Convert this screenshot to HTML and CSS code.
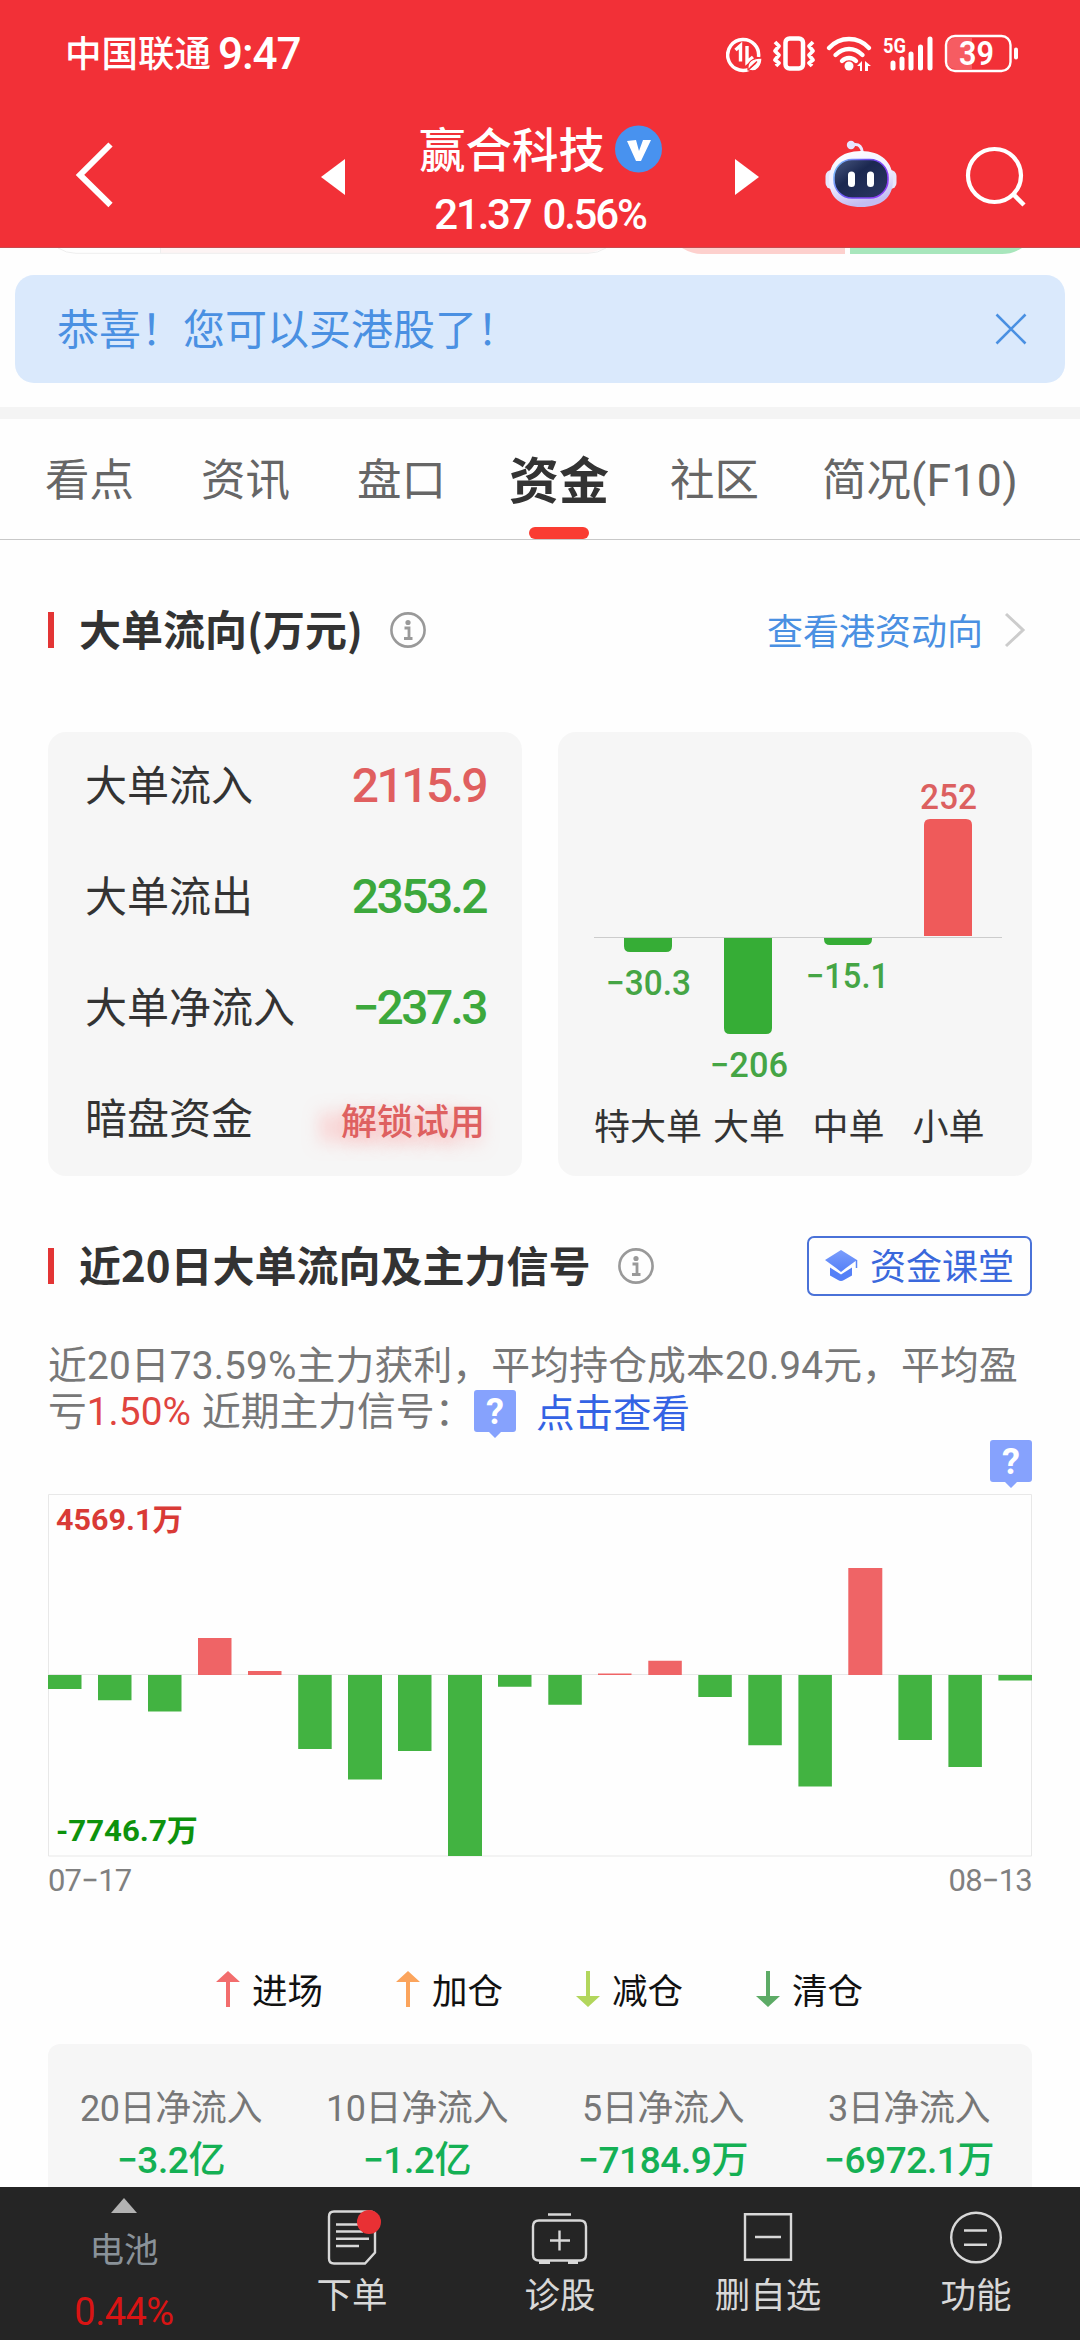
FILE: index.html
```html
<!DOCTYPE html>
<html lang="zh-CN">
<head>
<meta charset="utf-8">
<title>赢合科技 资金</title>
<link rel="stylesheet" href="styles.css">
</head>
<body>
<div class="screen">
  <header class="top">
    <div class="status">
      <span class="carrier">中国联通</span><span class="clock">9:47</span>
      <svg class="status-icons" width="294" height="40" viewBox="726 34 294 40" fill="none" stroke="#fff">
        <path d="M749 69.300A15.500 15.500 0 1 1 758.500 57" stroke-width="3.500"/>
        <path d="M735.500 50l5-4.500v16M747 46v16l6-5" stroke-width="3.400"/>
        <path d="M748 70c-1-9 5-12 14-12 0 8-5 14-11 12.500zM748 70l8-7" fill="#fff" stroke="#f23037" stroke-width="1.200"/>
        <path d="M750 68l7-6.500" stroke="#f23037" stroke-width="1.500"/>
        <rect x="785.500" y="38.500" width="17.500" height="30" rx="4" stroke-width="4.500"/>
        <path d="M775 42l4 4-4 5 4 4-4 5 4 3-3 3M813 42l-4 4 4 5-4 4 4 5-4 3 3 3" stroke-width="3.800" stroke-linejoin="round"/>
        <path d="M829 48c11-12 29-12 40 0M835.500 55c8-8 19-8 27 0M842 61c4-4 10-4 14 0" stroke-width="4.400" stroke-linecap="round"/>
        <circle cx="849" cy="66" r="4.500" fill="#fff" stroke="none"/>
        <path d="M857 66l5-5v10h-2v-5zM865 61l6 5h-3v5h-3z" fill="#fff" stroke="none"/>
        <path d="M893 63v5M902 59v9M911 54v14M920.500 47v21M930 39v29" stroke-width="5" stroke-linecap="round"/>
        <text x="883" y="53" textLength="23" lengthAdjust="spacingAndGlyphs" class="net">5G</text>
        <path d="M956 38h16v31h-16q-9 0-9-9v-13q0-9 9-9z" fill="#f65c62" stroke="none"/>
        <rect x="946" y="36" width="64.500" height="35" rx="9" stroke-width="2.400"/>
        <path d="M1016 49.500v8" stroke-width="4" stroke-linecap="round"/>
        <text x="959" y="65" textLength="35" lengthAdjust="spacingAndGlyphs" class="pct">39</text>
      </svg>
    </div>
    <div class="nav">
      <svg class="back" width="40" height="68" viewBox="0 0 40 68" fill="none"><path d="M35.500 4.500L5 35l30.500 30" stroke="#fff" stroke-width="6"/></svg>
      <svg class="prev" width="24" height="36" viewBox="0 0 24 36"><path d="M24 0v36L0 18z" fill="#fff"/></svg>
      <div class="stock">
        <div class="name"><span>赢合科技</span><svg width="47" height="48" viewBox="0 0 47 48"><circle cx="23.500" cy="24" r="23.500" fill="#4892ef"/><path d="M12 16l9-1 3 11 4-11h8L26 36h-5z" fill="#fff"/></svg></div>
        <div class="quote"><span>21.37</span><span>0.56%</span></div>
      </div>
      <svg class="next" width="24" height="36" viewBox="0 0 24 36"><path d="M0 0v36l24-18z" fill="#fff"/></svg>
      <svg class="robot" width="72" height="68" viewBox="825 140 72 68">
        <defs>
          <linearGradient id="shell" x1="0" y1="0" x2="0.300" y2="1"><stop offset="0" stop-color="#fff"/><stop offset=".6" stop-color="#eeecff"/><stop offset="1" stop-color="#c3bdf2"/></linearGradient>
          <linearGradient id="face" x1="0" y1="0" x2="1" y2="1"><stop offset="0" stop-color="#4b5a82"/><stop offset=".4" stop-color="#1b2850"/><stop offset="1" stop-color="#2b3763"/></linearGradient>
          <linearGradient id="rim" x1="0" y1="0" x2="1" y2="0.400"><stop offset="0" stop-color="#7fd4ff"/><stop offset=".5" stop-color="#6a4ff0"/><stop offset="1" stop-color="#8a3ff5"/></linearGradient>
        </defs>
        <path d="M852 145c8-2 10 3 10.500 8" fill="none" stroke="#ece8ff" stroke-width="3"/>
        <circle cx="851" cy="145" r="4.200" fill="#e6e4ff"/>
        <rect x="825.500" y="170" width="13" height="19" rx="6" fill="#e7e6fb"/><rect x="883.500" y="170" width="13" height="19" rx="6" fill="#e7e6fb"/>
        <path d="M861 151c20 0 32 11 32 29s-12 27-32 27-32-9-32-27 12-29 32-29z" fill="url(#shell)"/>
        <rect x="834" y="159.500" width="54" height="38.500" rx="18" fill="url(#face)" stroke="url(#rim)" stroke-width="1.600"/>
        <rect x="848" y="171.500" width="7" height="15.500" rx="3.500" fill="#fff"/><rect x="867" y="171.500" width="7" height="15.500" rx="3.500" fill="#fff"/>
      </svg>
      <svg class="search" width="62" height="62" viewBox="965 145 62 62" fill="none" stroke="#fff" stroke-width="4.200"><circle cx="994.500" cy="175.500" r="26.500"/><path d="M1013 194l11 11" stroke-width="4.500"/></svg>
    </div>
  </header>

  <div class="peek">
    <svg width="1080" height="6" viewBox="0 248 1080 6" fill="none"><path d="M160.500 248v5.500H588l18-5.500z" fill="#fdf4f4"/><path d="M58 248q8 5.300 18 5.300H588q10 0 18-5.300M160.500 248v5" stroke="#eee"/><path d="M682 248h163v6H702q-10 0-20-6z" fill="#fdd0cd"/><path d="M850 248h172q-10 6-20 6H850z" fill="#a8e6bc"/></svg>
  </div>

  <div class="banner"><span>恭喜！您可以买港股了！</span><svg width="32" height="32" viewBox="0 0 32 32"><path d="M1.500 1.500l29 29M30.500 1.500l-29 29" stroke="#4a90e2" stroke-width="2.600"/></svg></div>

  <nav class="tabs">
    <span class="tab">看点</span><span class="tab">资讯</span><span class="tab">盘口</span><span class="tab active">资金</span><span class="tab">社区</span><span class="tab f10">简况<span class="latin">(F10)</span></span>
  </nav>

  <section class="flow">
    <div class="head">
      <h2>大单流向(万元)</h2>
      <svg class="info" width="36" height="36" viewBox="0 0 36 36"><circle cx="18" cy="18" r="16.600" fill="none" stroke="#999" stroke-width="2.600"/><circle cx="18" cy="10.500" r="2.600" fill="#999"/><path d="M14.500 16h4.500v10M14 26.500h8.500" fill="none" stroke="#999" stroke-width="2.800"/></svg>
      <a class="more"><span>查看港资动向</span><svg width="22" height="36" viewBox="0 0 22 36"><path d="M2 2l17 16L2 34" fill="none" stroke="#ccc" stroke-width="3"/></svg></a>
    </div>
    <div class="cards">
      <div class="card list">
        <div class="row"><span>大单流入</span><b class="red">2115.9</b></div>
        <div class="row"><span>大单流出</span><b>2353.2</b></div>
        <div class="row"><span>大单净流入</span><b>−237.3</b></div>
        <div class="row"><span>暗盘资金</span><span class="unlock">解锁试用</span></div>
      </div>
      <svg class="card" width="474" height="444" viewBox="558 732 474 444">
        <g fill="#36ad36"><path d="M624 938h48v8q0 6-6 6h-36q-6 0-6-6z"/><path d="M724 938h48v90q0 6-6 6h-36q-6 0-6-6z"/><path d="M824 938h48v1q0 6-6 6h-36q-6 0-6-6z"/></g>
        <path d="M924 936v-111q0-6 6-6h36q6 0 6 6v111z" fill="#ef5a5a"/>
        <path d="M594 937.500h408" stroke="#ccc"/>
        <g class="vals">
          <text x="606" y="995" textLength="85" lengthAdjust="spacingAndGlyphs">−30.3</text>
          <text x="710" y="1077" textLength="78" lengthAdjust="spacingAndGlyphs">−206</text>
          <text x="806" y="988" textLength="83" lengthAdjust="spacingAndGlyphs">−15.1</text>
          <text x="920" y="809" textLength="57" lengthAdjust="spacingAndGlyphs" class="up">252</text>
        </g>
        <g class="cats"><text x="594" y="1139.500">特大单</text><text x="713" y="1139.500">大单</text><text x="812.500" y="1139.500">中单</text><text x="912.500" y="1139.500">小单</text></g>
      </svg>
    </div>
  </section>

  <section class="signal">
    <div class="head">
      <h2>近20日大单流向及主力信号</h2>
      <svg class="info" width="36" height="36" viewBox="0 0 36 36"><circle cx="18" cy="18" r="16.600" fill="none" stroke="#999" stroke-width="2.600"/><circle cx="18" cy="10.500" r="2.600" fill="#999"/><path d="M14.500 16h4.500v10M14 26.500h8.500" fill="none" stroke="#999" stroke-width="2.800"/></svg>
      <a class="class-btn"><svg width="35" height="32" viewBox="0 0 35 32"><defs><linearGradient id="cap" x1="0" y1="0" x2="0" y2="1"><stop offset="0" stop-color="#7b9dfc"/><stop offset="1" stop-color="#5580f7"/></linearGradient></defs><path d="M17 0l16 10-11 8-5 4-5-4L1 10z" fill="url(#cap)"/><path d="M6 17.500l11 7 11-7v8l-8 4.500q-3 2-6 0l-8-4.500z" fill="#5580f7"/><path d="M32.500 10v8" stroke="#5c86f6" stroke-width="1.500"/></svg><span>资金课堂</span></a>
    </div>
    <div class="summary">
      <div class="line one">近20日73.59%主力获利，平均持仓成本20.94元，平均盈</div>
      <div class="line two"><span>亏<em>1.50%</em></span><span class="near">近期主力信号：</span><svg class="bubble" width="42" height="48" viewBox="0 0 42 48"><path d="M3 0h36q3 0 3 3v36q0 3-3 3H27l-6 6-6-6H3q-3 0-3-3V3q0-3 3-3z" fill="#86a2fd"/><text x="21" y="34" text-anchor="middle" class="q">?</text></svg><a>点击查看</a></div>
    </div>
    <div class="bubble-row"><svg class="bubble" width="42" height="48" viewBox="0 0 42 48"><path d="M3 0h36q3 0 3 3v36q0 3-3 3H27l-6 6-6-6H3q-3 0-3-3V3q0-3 3-3z" fill="#86a2fd"/><text x="21" y="34" text-anchor="middle" class="q">?</text></svg></div>
    <svg class="history" width="984" height="364" viewBox="48 1494 984 364">
      <path d="M48.500 1494.500h983v361.500h-983zM48 1674.500h984" fill="none" stroke="#e8e8e8"/>
      <path fill="#42b341" d="M48 1675h33.500v14H48zM98 1675h33.500v25.300H98zM148 1675h33.500v36.500H148zM298.200 1675h33.500v74H298.200zM348 1675h34v104.500h-34zM398 1675h33.500v76H398zM448 1675h34v181h-34zM498 1675h33.500v11.700H498zM548.300 1675h33.500v29.700h-33.500zM698.300 1675h33.500v22h-33.500zM748.300 1675h33.500v70.300h-33.500zM798.400 1675h33.500v111.600h-33.500zM898.400 1675h33.500v65h-33.500zM948.400 1675h33.500v92h-33.500zM998.400 1675h33.600v5.500h-33.600z"/>
      <path fill="#ef6466" d="M198 1675h33.500v-37H198zM248 1675h33.500v-4H248zM598 1675h33.500v-1.600H598zM648.300 1675h33.500v-14.300h-33.500zM848.300 1675h34v-107h-34z"/>
      <text x="56" y="1530" textLength="127" lengthAdjust="spacingAndGlyphs" class="max">4569.1万</text>
      <text x="56" y="1841" textLength="142" lengthAdjust="spacingAndGlyphs" class="min">-7746.7万</text>
    </svg>
    <div class="dates"><span>07−17</span><span>08−13</span></div>
    <div class="legend">
      <span><svg width="24" height="36" viewBox="0 0 24 36"><path d="M12 0l12 11H14v25h-4V11H0z" fill="#f26d6d"/></svg>进场</span>
      <span><svg width="24" height="36" viewBox="0 0 24 36"><path d="M12 0l12 11H14v25h-4V11H0z" fill="#fba45c"/></svg>加仓</span>
      <span><svg width="24" height="36" viewBox="0 0 24 36"><path d="M12 36L0 25h10V0h4v25h10z" fill="#b2d65c"/></svg>减仓</span>
      <span><svg width="24" height="36" viewBox="0 0 24 36"><path d="M12 36L0 25h10V0h4v25h10z" fill="#5dab66"/></svg>清仓</span>
    </div>
    <div class="totals">
      <div><span>20日净流入</span><b>−3.2亿</b></div>
      <div><span>10日净流入</span><b>−1.2亿</b></div>
      <div><span>5日净流入</span><b>−7184.9万</b></div>
      <div><span>3日净流入</span><b>−6972.1万</b></div>
    </div>
  </section>

  <footer class="bar">
    <div class="sector"><svg width="26" height="15" viewBox="0 0 26 15"><path d="M13 0l13 15H0z" fill="#b2b2b2"/></svg><span>电池</span><b>0.44%</b></div>
    <div class="item"><svg width="60" height="60" viewBox="322 2208 60 60" fill="none" stroke="#d8d8d8" stroke-width="2.400"><path d="M334 2211.500h36q5 0 5 5v36l-10 11h-31q-5 0-5-5v-42q0-5 5-5z"/><path d="M336 2224.500h27M336 2231.500h27M336 2238.800h33M336 2246h23"/><circle cx="369" cy="2222" r="12" fill="#e93034" stroke="none"/></svg><span>下单</span></div>
    <div class="item"><svg width="60" height="60" viewBox="530 2208 60 60" fill="none" stroke="#d8d8d8" stroke-width="2.400"><path d="M548 2214.500h23M539 2220.500h41q6 0 6 6v28q0 6-6 6h-41q-6 0-6-6v-28q0-6 6-6z"/><path d="M550 2240.500h20M559.500 2230.500v20"/><path d="M539 2262.500h11M568 2262.500h10" stroke-width="3"/></svg><span>诊股</span></div>
    <div class="item"><svg width="60" height="60" viewBox="737 2208 60 60" fill="none" stroke="#d8d8d8" stroke-width="2.400"><path d="M744 2214.200h46v45.600h-46zM754 2237h26"/></svg><span>删自选</span></div>
    <div class="item"><svg width="60" height="60" viewBox="946 2208 60 60" fill="none" stroke="#d8d8d8" stroke-width="2.400"><circle cx="976" cy="2237.500" r="24.800"/><path d="M964 2230.500h23M964 2244.800h23"/></svg><span>功能</span></div>
  </footer>
</div>
</body>
</html>
```
FILE: styles.css
```css
* { box-sizing: border-box; }
body { margin: 0; background: #fff; }
.screen {
  width: 1080px; height: 2340px; overflow: hidden;
  display: flex; flex-direction: column;
  background: #fefefe; color: #333;
  font-family: "Noto Sans CJK SC", sans-serif;
}
svg { display: block; flex: none; }
svg text { stroke: none; }

.top { height: 248px; flex: none; background: #f23037; color: #fff; border-bottom: 1px solid #c9494e; }
.status { height: 108px; padding: 34px 60px 0 65px; display: flex; align-items: flex-start; }
.carrier { font-size: 36.500px; line-height: 36px; font-weight: 500; }
.clock { font: 500 44px/40px Roboto, sans-serif; margin-left: 7px; letter-spacing: -1px; }
.status-icons { margin-left: auto; }
.net { font: 700 21px Roboto, sans-serif; fill: #fff; }
.pct { font: 600 33px Roboto, sans-serif; fill: #fff; }

.nav { display: flex; height: 140px; align-items: flex-start; }
.back { margin: 32px 0 0 75px; }
.prev { margin: 51px 0 0 206px; }
.stock { width: 390px; height: 140px; display: flex; flex-direction: column; align-items: center; padding-top: 13px; }
.name { display: flex; align-items: center; gap: 10px; height: 56px; font-size: 46.500px; line-height: 56px; font-weight: 500; padding-left: 1px; }
.name span { padding-bottom: 5px; }
.quote { display: flex; gap: 12px; font: 500 42px/52px Roboto, sans-serif; letter-spacing: -2.200px; margin-top: 12px; }
.next { margin: 51px 0 0; }
.robot { margin: 32px 0 0 66px; }
.search { margin: 37px 0 0 68px; }

.peek { height: 6px; flex: none; }
.banner {
  height: 108px; margin: 21px 15px 0; padding: 0 38px 0 42px; flex: none;
  display: flex; align-items: center; justify-content: space-between;
  background: #dae9fc; color: #4a90e2; border-radius: 19px; font-size: 42px; line-height: 60px;
}
.banner span { padding-bottom: 4px; }

.tabs {
  height: 133px; margin-top: 24px; border-top: 12px solid #f4f4f4; border-bottom: 1px solid #c8c8c8; flex: none;
  display: flex; padding-left: 45px; color: #666; font-size: 44.500px; line-height: 116px;
}
.tab { margin-right: 67px; white-space: nowrap; }
.tab.active { position: relative; color: #333; font-size: 50px; font-weight: 700; margin: 0 61px 0 -4px; }
.tab.active::after { content: ""; position: absolute; left: 20px; bottom: 0; width: 60px; height: 12px; border-radius: 6px; background: #fa3c32; }
.tab.f10 { margin: 0 0 0 -4px; }
.latin { font-family: Roboto, sans-serif; letter-spacing: .3px; }

.flow, .signal { padding: 0 48px; flex: none; }
.head { display: flex; align-items: center; height: 60px; }
.flow .head { margin-top: 60px; }
.head h2 { margin: 0; font-size: 42px; font-weight: 700; line-height: 56px; height: 60px; padding-left: 31px; background: linear-gradient(#e33535, #e33535) 0 12px / 6px 36px no-repeat; }
.info { margin-left: 27px; }
.more { margin-left: auto; display: flex; align-items: center; gap: 21px; color: #4a90e2; font-size: 36px; padding-right: 6px; }
.more span { padding-bottom: 3px; }
.cards { display: flex; gap: 36px; margin-top: 72px; }
.card { width: 474px; height: 444px; background: #f6f6f6; border-radius: 18px; }
.row { height: 111px; padding: 0 36px 4px 37px; display: flex; align-items: center; justify-content: space-between; font-size: 42px; line-height: 60px; }
.row span { padding-bottom: 5px; }
.row b { font: 500 48px/60px Roboto, sans-serif; letter-spacing: -2.600px; color: #3ca83c; }
.row b.red { color: #e05f5f; }
.row .unlock { font-size: 36px; font-weight: 500; color: #de6060; text-shadow: -24px 6px 16px rgba(255, 160, 160, .5), 0 6px 16px rgba(255, 160, 160, .5); padding: 0 1px 0 0; }
.vals { font: 500 35px Roboto, sans-serif; fill: #45a545; }
.vals .up { fill: #dc6060; }
.cats { font-size: 36px; fill: #333; }

.signal .head { margin-top: 60px; }
.class-btn { margin-left: auto; width: 225px; height: 60px; border: 2px solid #4a72d8; border-radius: 7px; display: flex; align-items: center; padding-left: 15px; gap: 11px; color: #3a68dc; font-size: 36px; line-height: 52px; }
.class-btn span { padding-bottom: 5px; }
.summary { margin-top: 47px; color: #777; font-size: 38.800px; height: 93px; white-space: nowrap; font-family: Roboto, "Noto Sans CJK SC", sans-serif; }
.line { height: 46px; line-height: 46px; }
.line.one { letter-spacing: .15px; }
.line.two { display: flex; }
.line em { font-style: normal; color: #e0443e; }
.near { margin-left: 11px; width: 264px; }
.line .bubble { margin: 1px 20px 0 8px; }
.line a { color: #3463e4; line-height: 50px; font-size: 38.500px; }
.q { font: 700 36px Roboto, sans-serif; fill: #fff; }
.bubble-row { height: 48px; margin-top: 4px; display: flex; justify-content: flex-end; }
.history { margin-top: 6px; }
.max, .min { font: 700 30px Roboto, "Noto Sans CJK SC", sans-serif; fill: #d93a36; }
.min { fill: #0d920d; }
.dates { display: flex; justify-content: space-between; font: 400 31px/46px Roboto, sans-serif; height: 44px; color: #808080; letter-spacing: -.8px; }
.legend { display: flex; gap: 60px; margin: 62px 0 0 168px; height: 54px; color: #111; font-size: 35.500px; line-height: 54px; }
.legend span { width: 120px; display: flex; align-items: center; gap: 12px; padding-bottom: 4px; white-space: nowrap; }
.totals { height: 160px; margin-top: 26px; padding-top: 39px; background: #f6f6f6; border-radius: 12px 12px 0 0; display: grid; grid-template-columns: repeat(4, 1fr); text-align: center; font-family: Roboto, "Noto Sans CJK SC", sans-serif; }
.totals span, .totals b { display: block; height: 52px; font-size: 36px; line-height: 52px; letter-spacing: -.4px; white-space: nowrap; }
.totals span { color: #777; }
.totals b { font-size: 37px; font-weight: 500; color: #14b054; }

.bar { position: fixed; left: 0; top: 2187px; width: 1080px; height: 153px; background: #252525; display: grid; grid-template-columns: 248px repeat(4, 208px); color: #d8d8d8; }
.sector { display: flex; flex-direction: column; align-items: center; padding-top: 11px; }
.sector span { color: #8a9299; font-size: 34.500px; line-height: 50px; margin-top: 9px; }
.sector b { font: 400 38px/48px Roboto, sans-serif; color: #d91414; margin-top: 16px; letter-spacing: -.5px; }
.item { display: flex; flex-direction: column; align-items: center; padding-top: 21px; font-size: 35.500px; line-height: 50px; }
```
